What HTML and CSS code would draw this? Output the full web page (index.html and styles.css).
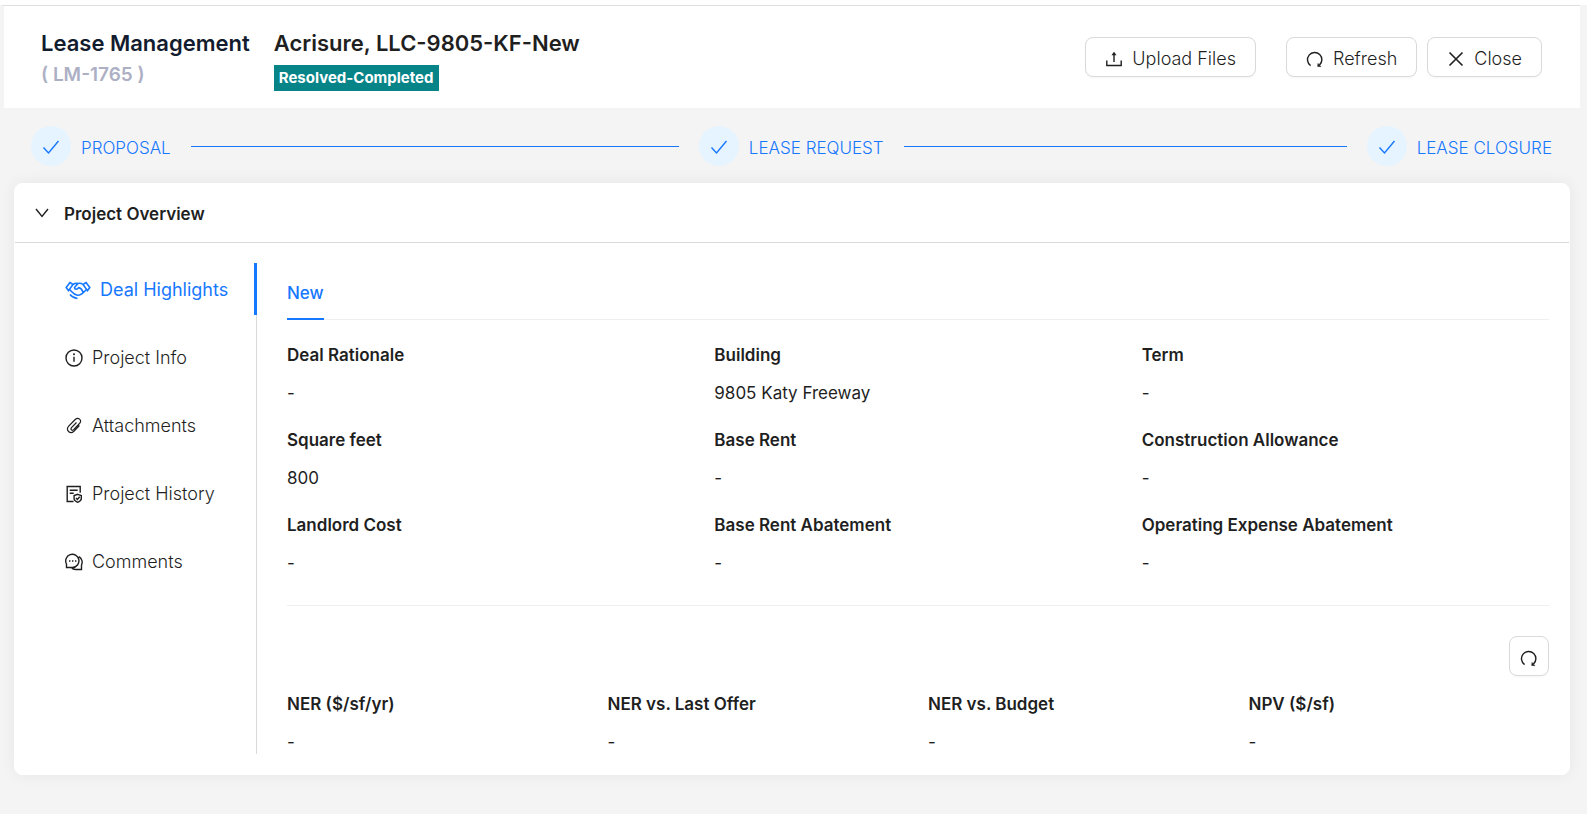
FILE: index.html
```html
<!DOCTYPE html>
<html lang="en">
<head>
<meta charset="utf-8">
<title>Lease Management</title>
<link rel="stylesheet" href="styles.css">
</head>
<body>
<svg class="sprite" aria-hidden="true">
  <symbol id="i-check" viewBox="0 0 18 18"><path d="M1.5 9.5l5 5.500L16.500 3"/></symbol>
  <symbol id="i-reload" viewBox="0 0 18 18"><path d="M4.600 15.600A7.200 7.200 0 1 1 13.400 15.100"/><path d="M11.600 16.400l.4-3 2.900 3.300z" fill="currentColor" stroke-width=".5"/></symbol>
</svg>

<header class="header">
  <div class="case">
    <h1 class="title">Lease Management</h1>
    <span class="case-id">( LM-1765 )</span>
  </div>
  <div class="case">
    <h2 class="title title-name">Acrisure, LLC-9805-KF-New</h2>
    <span class="status">Resolved-Completed</span>
  </div>
  <div class="actions">
    <button class="btn btn-upload" type="button">
      <svg class="icon" viewBox="0 0 18 18"><path d="M1.800 10.500v5h14.400v-5M9 12V4"/><path d="M6.500 5.200L9 1.800l2.500 3.400z" fill="currentColor" stroke="none"/></svg>
      Upload Files
    </button>
    <button class="btn" type="button"><svg class="icon"><use href="#i-reload"/></svg>Refresh</button>
    <button class="btn" type="button">
      <svg class="icon" viewBox="0 0 18 18"><path d="M2.500 2.500l13 13M15.500 2.500l-13 13" stroke-width="1.600"/></svg>
      Close
    </button>
  </div>
</header>

<ol class="steps">
  <li class="step"><span class="step-mark"><svg class="icon"><use href="#i-check"/></svg></span><span class="step-name">PROPOSAL</span></li>
  <li class="step"><span class="step-mark"><svg class="icon"><use href="#i-check"/></svg></span><span class="step-name">LEASE REQUEST</span></li>
  <li class="step"><span class="step-mark"><svg class="icon"><use href="#i-check"/></svg></span><span class="step-name">LEASE CLOSURE</span></li>
</ol>

<main class="card">
  <button class="card-head" type="button" aria-expanded="true">
    <svg class="chevron" viewBox="0 0 14 14"><path d="M1 2l6 7.500L13 2"/></svg>
    Project Overview
  </button>
  <div class="card-body">
    <nav class="side">
      <a class="side-item active" href="#highlights">
        <svg class="icon-wide" viewBox="0 0 26 20"><path d="M5 2.500L1.200 7.600l2.300 3L8 4.500zM21 2.500l3.800 5.100-2.300 3L18 4.500zM8 4.500c2-1.300 3.500-1.500 5-1 2-.7 3.500-.2 5 1M4.500 9.500c2 1.500 3.500 5 8 5.800 3.200.2 6-2.600 8.700-5.600M13 3.500L9.500 7.600c.2 2 2.600 2.200 4.400 0 2 .5 3.300 2 4.100 4.600M5 14.500c1.500 2 4 3.500 7.500 4" stroke-width="1.600"/></svg>
        Deal Highlights
      </a>
      <a class="side-item" href="#info">
        <svg class="icon" viewBox="0 0 18 18"><circle cx="9" cy="9" r="8"/><path d="M9 7.800v5"/><circle cx="9" cy="5.300" r="1" fill="currentColor" stroke="none"/></svg>
        Project Info
      </a>
      <a class="side-item" href="#attachments">
        <svg class="icon" viewBox="0 0 18 18"><path d="M11.500 5.500l-5 5.200c-1.400 1.700.6 3.500 2.100 2l5.900-6.200c2.900-3.200-1.200-7-4.300-4L3.700 9.200c-3.400 4 1.400 8.600 5.200 5l5.500-5.700" stroke-width="1.200"/></svg>
        Attachments
      </a>
      <a class="side-item" href="#history">
        <svg class="icon" viewBox="0 0 18 18"><path d="M8.500 16.500H2.200v-15h13v6.200M4.700 5.200h8M4.700 8.200h4"/><path d="M12.700 9.300l3.600 1.300v3.200c0 1.600-2 2.900-3.600 3.500-1.600-.6-3.600-1.900-3.600-3.500v-3.200z"/><path d="M11 13l1.400 1.400 2.300-2.600"/></svg>
        Project History
      </a>
      <a class="side-item" href="#comments">
        <svg class="icon" viewBox="0 0 18 18"><path d="M1.500 14.500V11A6.600 6.600 0 1 1 7.600 14.500zM14 3.700a6.400 6.400 0 0 1 2.500 8.300v4.500h-6c-1.500 0-3-.7-4-2"/><path d="M4 8h1.400M7 8h1.400M10 8h1.400" stroke-width="1.600"/></svg>
        Comments
      </a>
    </nav>
    <section class="content">
      <div class="tabs" role="tablist"><button class="tab" type="button" role="tab" aria-selected="true">New</button></div>
      <dl class="fields fields-3">
        <div class="field"><dt>Deal Rationale</dt><dd>-</dd></div>
        <div class="field"><dt>Building</dt><dd>9805 Katy Freeway</dd></div>
        <div class="field"><dt>Term</dt><dd>-</dd></div>
        <div class="field"><dt>Square feet</dt><dd>800</dd></div>
        <div class="field"><dt>Base Rent</dt><dd>-</dd></div>
        <div class="field"><dt>Construction Allowance</dt><dd>-</dd></div>
        <div class="field"><dt>Landlord Cost</dt><dd>-</dd></div>
        <div class="field"><dt>Base Rent Abatement</dt><dd>-</dd></div>
        <div class="field"><dt>Operating Expense Abatement</dt><dd>-</dd></div>
      </dl>
      <div class="tools"><button class="btn btn-square" type="button" aria-label="Refresh figures"><svg class="icon"><use href="#i-reload"/></svg></button></div>
      <dl class="fields fields-4">
        <div class="field"><dt>NER ($/sf/yr)</dt><dd>-</dd></div>
        <div class="field"><dt>NER vs. Last Offer</dt><dd>-</dd></div>
        <div class="field"><dt>NER vs. Budget</dt><dd>-</dd></div>
        <div class="field"><dt>NPV ($/sf)</dt><dd>-</dd></div>
      </dl>
    </section>
  </div>
</main>
</body>
</html>
```
FILE: styles.css
```css
* { box-sizing: border-box; }

body {
  margin: 0;
  padding-top: 5px;
  background: linear-gradient(#fff 5px, #f4f4f4 5px);
  color: #1f1f1f;
  font: 17px/24px Inter, "Liberation Sans", sans-serif;
}

.sprite { position: absolute; width: 0; height: 0; }

svg {
  flex: none;
  fill: none;
  stroke: currentColor;
  stroke-width: 1.4;
}

.icon { width: 18px; height: 18px; }
.icon-wide { width: 26px; height: 20px; }

button { font: inherit; color: inherit; cursor: pointer; }

.header {
  display: flex;
  gap: 24px;
  height: 103px;
  margin-right: 7px;
  padding: 22px 38px 0 37px;
  border-top: 1px solid #dedfe1;
  border-left: 4px solid #f4f4f4;
  background: #fff;
}

.case { display: flex; flex-direction: column; align-items: flex-start; }

.title { margin: 0; color: #131b2e; font-size: 22px; line-height: 30px; font-weight: 600; }
.title-name { color: #1f1f1f; }
.case-id { margin-top: 5px; color: #adb0c4; font-size: 19px; font-weight: 600; }

.status {
  margin-top: 7px;
  padding: 0 5px;
  background: #068488;
  color: #fff;
  font-size: 15px;
  line-height: 26px;
  font-weight: 700;
}

.actions { display: flex; gap: 10px; margin-left: auto; padding-top: 9px; }

.btn {
  display: flex;
  align-items: center;
  gap: 9px;
  height: 40px;
  padding: 3px 19px 0;
  border: 1px solid #d9d9d9;
  border-radius: 8px;
  background: #fff;
  box-shadow: 0 2px 0 rgba(0, 0, 0, 0.02);
  font-size: 18px;
  font-weight: 300;
}

.btn-upload { margin-right: 20px; }
.btn-square { width: 40px; padding: 3px 0 0; justify-content: center; }

.steps {
  display: flex;
  margin: 0;
  padding: 18px 35px 17px 31px;
  list-style: none;
  color: #1677ff;
  font-weight: 300;
}

.step { display: flex; align-items: center; flex: 1; }
.step:last-child { flex: none; }
.step-name { padding-top: 4px; }
.step-mark {
  display: flex;
  align-items: center;
  justify-content: center;
  width: 40px;
  height: 40px;
  padding-top: 2px;
  margin-right: 10px;
  border-radius: 50%;
  background: #e6f4ff;
}
.step:not(:last-child)::after {
  content: "";
  flex: 1;
  height: 1px;
  margin: 0 20px;
  background: #1677ff;
}

.card {
  margin: 0 17px 39px 14px;
  border: 1px solid #fff;
  border-radius: 8px;
  background: #fff;
  box-shadow: 0 0 16px rgba(0, 0, 0, 0.06);
}

.card-head {
  display: flex;
  align-items: center;
  gap: 15px;
  width: 100%;
  height: 59px;
  padding: 1px 20px 0;
  border: 0;
  border-bottom: 1px solid #d9d9d9;
  background: none;
  font-weight: 600;
}

.chevron { width: 14px; height: 14px; }

.card-body { display: flex; padding: 20px 20px 20px 30px; }

.side {
  display: flex;
  flex-direction: column;
  gap: 16px;
  flex: 0 0 212px;
  border-right: 1px solid #d9d9d9;
  font-size: 18px;
  font-weight: 300;
}

.side-item {
  display: flex;
  align-items: center;
  gap: 9px;
  height: 52px;
  padding: 2px 0 0 20px;
  color: inherit;
  text-decoration: none;
}

.side-item.active { margin-right: -1px; border-right: 3px solid #1677ff; color: #1677ff; font-weight: 400; }

.content { flex: 1; padding-left: 30px; }

.tabs { display: flex; border-bottom: 1px solid #efefef; }

.tab {
  height: 57px;
  margin-bottom: -1px;
  padding: 4px 0 0;
  border: 0;
  border-bottom: 2px solid #1677ff;
  background: none;
  color: #1677ff;
  font-weight: 500;
}

.fields { display: grid; column-gap: 20px; margin: 0; }
.fields-3 {
  grid-template-columns: repeat(3, 1fr);
  row-gap: 23px;
  padding: 23px 0 30px;
  border-bottom: 1px solid #efefef;
}
.fields-4 { grid-template-columns: repeat(4, 1fr); padding-top: 16px; }

.field dt { font-weight: 600; }
.field dd { margin: 14px 0 0; }

.tools { display: flex; justify-content: flex-end; padding-top: 30px; }
```
